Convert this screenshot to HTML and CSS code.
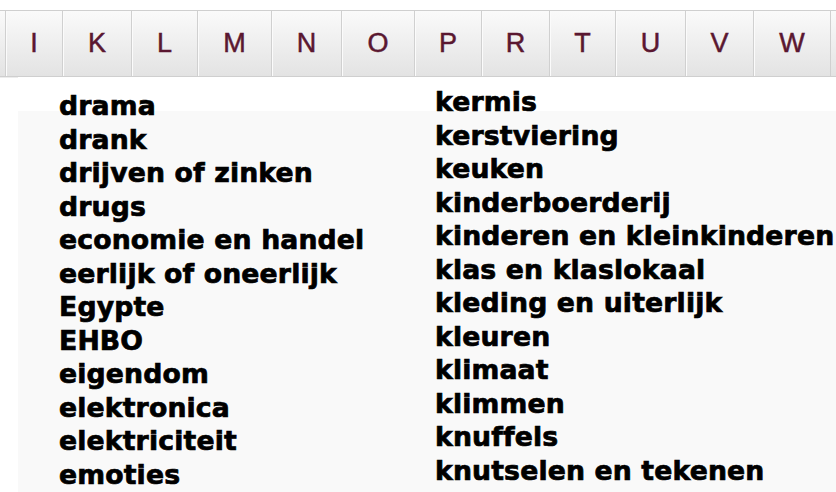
FILE: index.html
```html
<!DOCTYPE html>
<html lang="nl">
<head>
<meta charset="utf-8">
<title>Thema's</title>
<link rel="stylesheet" href="styles.css">
</head>
<body>
<nav class="alpha">
  <span class="cell edge"></span>
  <a class="cell" href="#">I</a>
  <a class="cell" href="#">K</a>
  <a class="cell" href="#">L</a>
  <a class="cell" href="#">M</a>
  <a class="cell" href="#">N</a>
  <a class="cell" href="#">O</a>
  <a class="cell" href="#">P</a>
  <a class="cell" href="#">R</a>
  <a class="cell" href="#">T</a>
  <a class="cell" href="#">U</a>
  <a class="cell" href="#">V</a>
  <a class="cell" href="#">W</a>
  <span class="cell edge end"></span>
</nav>
<main class="panel">
  <ul class="list list-left">
    <li>drama</li>
    <li>drank</li>
    <li>drijven of zinken</li>
    <li>drugs</li>
    <li>economie en handel</li>
    <li>eerlijk of oneerlijk</li>
    <li>Egypte</li>
    <li>EHBO</li>
    <li>eigendom</li>
    <li>elektronica</li>
    <li>elektriciteit</li>
    <li>emoties</li>
  </ul>
  <ul class="list list-right">
    <li>kermis</li>
    <li>kerstviering</li>
    <li>keuken</li>
    <li>kinderboerderij</li>
    <li>kinderen en kleinkinderen</li>
    <li>klas en klaslokaal</li>
    <li>kleding en uiterlijk</li>
    <li>kleuren</li>
    <li>klimaat</li>
    <li>klimmen</li>
    <li>knuffels</li>
    <li>knutselen en tekenen</li>
  </ul>
</main>
</body>
</html>
```
FILE: styles.css
```css
html, body {
  margin: 0;
  padding: 0;
  background: #ffffff;
  overflow: hidden;
}
body {
  width: 836px;
  height: 492px;
}
.alpha {
  margin-top: 10px;
  display: grid;
  grid-template-columns: 5px 57px 69px 66px 74px 70px 73px 67px 68px 66px 70px 68px 77px 1fr;
  height: 67px;
  box-sizing: border-box;
  border-top: 1px solid #cfcfcf;
  border-bottom: 1px solid #cfcfcf;
  box-shadow: 0 1px 0 #ececec;
  background: linear-gradient(to bottom, #fafafa, #e3e3e3);
  white-space: nowrap;
}
.cell {
  display: flex;
  align-items: center;
  justify-content: center;
  border-left: 1px solid #d0d0d0;
  box-shadow: inset 1px 0 0 #fbfbfb;
  font-family: "Liberation Sans", Arial, sans-serif;
  font-size: 27px;
  color: #5a1730;
  text-decoration: none;
  -webkit-text-stroke: 0.5px #5a1730;
}
.edge {
  border-left: 0;
  box-shadow: none;
}
.edge.end {
  border-left: 1px solid #d0d0d0;
}
.panel {
  margin-left: 18px;
  display: grid;
  grid-template-columns: 417px auto;
  align-items: start;
  height: 415px;
  background: linear-gradient(to bottom, #ffffff 0, #ffffff 34px, #f9f9f9 34px);
}
.list {
  list-style: none;
  margin: 0;
  padding: 0;
  font-family: "DejaVu Sans", "Liberation Sans", sans-serif;
  font-weight: bold;
  font-size: 26.7px;
  letter-spacing: 0.15px;
  color: #000;
  white-space: nowrap;
  -webkit-text-stroke: 0.7px #000;
  line-height: 33.5px;
}
.list-left {
  margin-top: 12px;
  padding-left: 41px;
}
.list-right {
  margin-top: 8px;
}
```
